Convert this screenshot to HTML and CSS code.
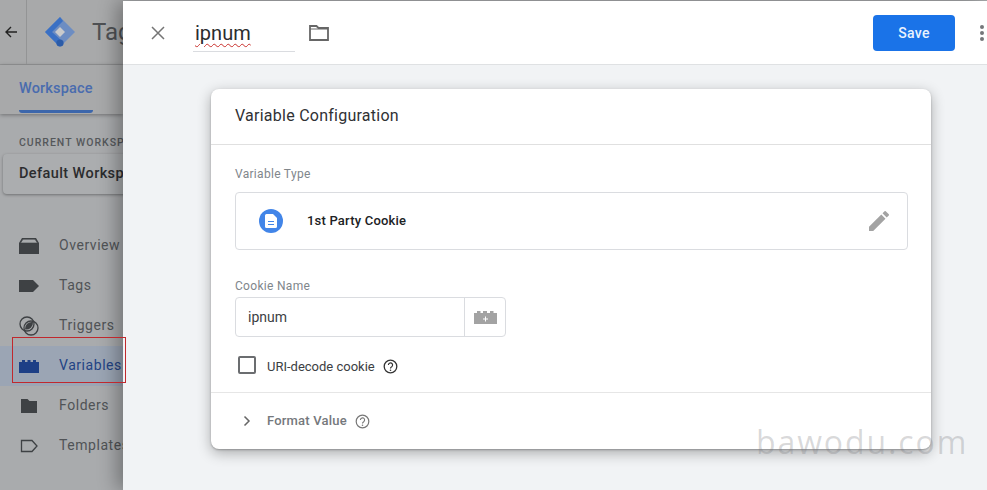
FILE: index.html
```html
<!DOCTYPE html>
<html lang="en">
  <head>
    <meta charset="UTF-8" />
    <title>Variable Configuration</title>
    <link rel="stylesheet" href="styles.css">
  </head>
  <body>
    <div class="page">
      <!-- dimmed app behind the panel -->
      <div class="app">
        <div class="topbar">
          <div class="back">
            <svg width="14" height="14" viewBox="0 0 14 14"><path d="M13 7H2.500M7 2 2 7l5 5" fill="none" stroke="#222" stroke-width="1.400"/></svg>
          </div>
          <div class="brand">
            <svg width="32" height="32" viewBox="0 0 32 32">
              <path d="M16 1 31 16 16 31 1 16Z" fill="#6d8dc2"/>
              <path d="M16 1 1 16 14 29 18 25 8 16 19 5 Z" fill="#3a70c4"/>
              <path d="M16 11 21 16 16 21 11 16Z" fill="#c9cacb"/>
              <circle cx="16" cy="27" r="3.600" fill="#2c5ca8"/>
            </svg>
            <span class="brand-name">Tag</span>
          </div>
        </div>
        <div class="tabs">
          <div class="tab">Workspace</div>
        </div>
        <div class="sidebar">
          <div class="ws-label">CURRENT WORKSP</div>
          <div class="ws-card">Default Worksp</div>
          <ul class="nav">
            <li class="nav-item">
              <svg width="20" height="16" viewBox="0 0 20 16"><path d="M3 0h14l3 5v11H0V5Z" fill="#3e4144"/><path d="M1.500 5 4 1.200h12L18.500 5Z" fill="#a9abad" stroke="#3e4144" stroke-width=".6"/></svg>
              Overview
            </li>
            <li class="nav-item">
              <svg width="20" height="16" viewBox="0 0 20 16"><path d="M0 2h14l6 6-6 6H0Z" fill="#3e4144"/></svg>
              Tags
            </li>
            <li class="nav-item">
              <svg width="20" height="20" viewBox="0 0 20 20"><circle cx="8" cy="8" r="7" fill="none" stroke="#3e4144" stroke-width="1.300"/><circle cx="12" cy="12" r="7" fill="none" stroke="#3e4144" stroke-width="1.300"/><path d="M6 13.500A7 7 0 0 1 14 6 7 7 0 0 1 6 13.500Z" fill="#3e4144"/></svg>
              Triggers
            </li>
            <li class="nav-item nav-active">
              <svg width="20" height="13" viewBox="0 0 20 13"><path d="M0 2h3V0h3v2h2.500V0h3v2H14V0h3v2h3v11H0Z" fill="#1d3f86"/></svg>
              Variables
            </li>
            <li class="nav-item">
              <svg width="20" height="16" viewBox="0 0 20 16"><path d="M2 1h6.500l2 2H18v12H2Z" fill="#3e4144"/></svg>
              Folders
            </li>
            <li class="nav-item">
              <svg width="20" height="16" viewBox="0 0 20 16"><path d="M2.500 2.500h10.500l5 5.500-5 5.500H2.500Z" fill="none" stroke="#3e4144" stroke-width="1.300"/></svg>
              Templates
            </li>
          </ul>
        </div>
      </div>

      <!-- variable editor sheet -->
      <div class="sheet">
        <div class="sheet-head">
          <svg class="close" width="16" height="16" viewBox="0 0 16 16"><path d="M2 2l12 12M14 2 2 14" stroke="#757575" stroke-width="1.500"/></svg>
          <div class="name-field"><span class="name-text">ipnum</span></div>
          <svg class="folder" width="20" height="16" viewBox="0 0 20 16"><path d="M1 1h6.500l2 2H19v12H1Z" fill="none" stroke="#666" stroke-width="1.800"/><path d="M1 4h18" stroke="#666" stroke-width="1"/></svg>
          <button class="save">Save</button>
          <div class="more"><i></i><i></i><i></i></div>
        </div>
        <div class="sheet-body">
          <div class="card">
            <div class="card-title">Variable Configuration</div>
            <div class="card-content">
              <div class="field-label">Variable Type</div>
              <div class="type-box">
                <span class="type-icon">
                  <svg width="12" height="14" viewBox="0 0 12 14"><path d="M1.500 0H8l4 4v8.500a1.500 1.500 0 0 1-1.500 1.500h-9A1.500 1.500 0 0 1 0 12.500v-11A1.500 1.500 0 0 1 1.500 0Z" fill="#fff"/><path d="M3 7.500h6M3 10.500h6" stroke="#4285e8" stroke-width="1.200"/></svg>
                </span>
                <span class="type-name">1st Party Cookie</span>
                <svg class="pencil" width="20" height="20" viewBox="0 0 20 20"><path d="M0 20v-4.200L12.300 3.500l4.200 4.200L4.200 20ZM13.500 2.300 15.600.2a.8.8 0 0 1 1.100 0l3.100 3.100a.8.8 0 0 1 0 1.100l-2.100 2.100Z" fill="#a3a3a3"/></svg>
              </div>
              <div class="field-label cookie-label">Cookie Name</div>
              <div class="input-box">
                <span class="input-text">ipnum</span>
                <span class="input-btn">
                  <svg width="23" height="13" viewBox="0 0 23 13"><path d="M0 2h3V0h3.500v2H9V0h4v2h3V0h3.500v2H23v11H0Z" fill="#a3a3a3"/><path d="M11.500 5.500v5M9 8h5" stroke="#fff" stroke-width="1"/></svg>
                </span>
              </div>
              <div class="check-row">
                <span class="checkbox"></span>
                <span class="check-text">URI-decode cookie</span>
                <svg class="help" width="15" height="15" viewBox="0 0 15 15"><circle cx="7.500" cy="7.500" r="6.300" fill="none" stroke="#333" stroke-width="1.300"/><path d="M5.400 6a2.100 2.100 0 1 1 3.300 1.700c-.8.500-1.200.9-1.200 1.800" fill="none" stroke="#333" stroke-width="1.200"/><circle cx="7.500" cy="11.200" r=".8" fill="#333"/></svg>
              </div>
            </div>
            <div class="format-row">
              <svg class="chevron" width="8" height="12" viewBox="0 0 8 12"><path d="M1.500 1.500 6 6l-4.500 4.500" fill="none" stroke="#666" stroke-width="1.500"/></svg>
              <span class="format-text">Format Value</span>
              <svg class="help" width="15" height="15" viewBox="0 0 15 15"><circle cx="7.500" cy="7.500" r="6.300" fill="none" stroke="#777" stroke-width="1.200"/><path d="M5.400 6a2.100 2.100 0 1 1 3.300 1.700c-.8.500-1.200.9-1.200 1.800" fill="none" stroke="#777" stroke-width="1.100"/><circle cx="7.500" cy="11.200" r=".8" fill="#777"/></svg>
            </div>
          </div>
        </div>
      </div>

      <div class="red-box"></div>
      <div class="watermark">bawodu.com</div>
    </div>
  </body>
</html>
```

FILE: styles.css
```css
* {
  box-sizing: border-box;
}

body {
  margin: 0;
  font-family: Roboto, "Liberation Sans", sans-serif;
}

.page {
  position: relative;
  width: 987px;
  height: 490px;
  overflow: hidden;
  background-color: #a9abad;
}

.app {
  width: 123px;
  height: 490px;
  overflow: hidden;
}

.topbar {
  display: flex;
  height: 65px;
  background-color: #a8a9aa;
  border-bottom: 1px solid #969798;
}
.back {
  flex: none;
  width: 27px;
  display: flex;
  align-items: center;
  justify-content: flex-start;
  padding-left: 4px;
  border-right: 1px solid #939495;
}
.brand {
  display: flex;
  align-items: center;
  gap: 16px;
  padding-left: 17px;
  white-space: nowrap;
}
.brand svg {
  flex: none;
}
.brand-name {
  font-size: 24px;
  color: #4f5154;
}

.tabs {
  height: 49px;
  background-color: #a8a9aa;
  padding: 15px 0 0 19px;
  box-shadow: 0 1px 4px rgba(0, 0, 0, 0.35);
}
.tab {
  width: 74px;
  height: 33px;
  font-size: 14.500px;
  font-weight: 500;
  letter-spacing: 0.15px;
  color: #4a6cae;
  border-bottom: 3px solid #3c66ab;
  border-radius: 0 0 3px 3px;
  white-space: nowrap;
}

.ws-label {
  margin: 22px 0 0 19px;
  font-size: 10.500px;
  font-weight: 500;
  letter-spacing: 1px;
  line-height: 13px;
  color: #55585b;
  white-space: nowrap;
}
.ws-card {
  width: 180px;
  height: 40px;
  margin: 5px 0 0 3px;
  padding-left: 16px;
  line-height: 39px;
  font-size: 14.500px;
  font-weight: 500;
  letter-spacing: 0.4px;
  color: #2b2c2e;
  background-color: #abadaf;
  border-radius: 4px;
  box-shadow: 0 1px 3px rgba(0, 0, 0, 0.35);
  white-space: nowrap;
}

.nav {
  list-style: none;
  margin: 32px 0 0;
  padding: 0;
}
.nav-item {
  display: flex;
  align-items: center;
  gap: 20px;
  height: 40px;
  padding: 0 0 2px 19px;
  font-size: 14px;
  letter-spacing: 0.55px;
  color: #505356;
  white-space: nowrap;
}
.nav-item svg {
  flex: none;
  margin-top: 2px;
}
.nav-active {
  background-color: #9ba5b4;
  color: #234384;
}

/* sheet over the app */
.sheet {
  position: absolute;
  top: 1px;
  left: 123px;
  right: 0;
  bottom: 0;
  background-color: #f1f3f5;
  box-shadow: -6px 0 18px rgba(0, 0, 0, 0.32);
}
.sheet-head {
  display: flex;
  align-items: center;
  height: 64px;
  padding-left: 27px;
  background-color: #fff;
  border-bottom: 1px solid #dfe1e3;
}
.name-field {
  width: 102px;
  height: 34px;
  margin: 0 14px 0 27px;
  padding: 0 2px;
  border-bottom: 1px solid #dadce0;
  position: relative;
  top: 2px;
}
.name-text {
  font-size: 20px;
  line-height: 30px;
  color: #2b2c2e;
  text-decoration: underline wavy #c9302c 1px;
  text-underline-offset: 3px;
}
.save {
  width: 82px;
  height: 36px;
  margin-left: 544px;
  padding: 0;
  border: 0;
  border-radius: 4px;
  background-color: #1a73e8;
  color: #e9f2fe;
  font-family: Roboto, "Liberation Sans", sans-serif;
  font-size: 14px;
  font-weight: 500;
  letter-spacing: 0.3px;
}
.more {
  display: flex;
  flex-direction: column;
  gap: 2px;
  margin-left: 25px;
}
.more i {
  width: 4px;
  height: 4px;
  border-radius: 50%;
  background-color: #75777a;
}

.sheet-body {
  padding: 24px 0 0 88px;
}
.card {
  width: 720px;
  height: 360px;
  background-color: #fff;
  border-radius: 8px;
  box-shadow: 0 1px 2px rgba(0, 0, 0, 0.25), 0 4px 14px rgba(0, 0, 0, 0.3);
}
.card-title {
  height: 56px;
  padding: 17px 0 0 24px;
  font-size: 16px;
  line-height: 20px;
  letter-spacing: 0.25px;
  color: #303134;
  border-bottom: 1px solid #e0e0e0;
}
.card-content {
  height: 248px;
  padding: 22px 24px 0;
  border-bottom: 1px solid #e6e6e6;
}
.field-label {
  font-size: 12px;
  line-height: 14px;
  letter-spacing: 0.3px;
  color: #80868b;
}
.type-box {
  display: flex;
  align-items: center;
  width: 673px;
  height: 58px;
  margin-top: 11px;
  padding: 0 18px 2px 23px;
  border: 1px solid #dadce0;
  border-radius: 4px;
}
.type-icon {
  display: flex;
  align-items: center;
  justify-content: center;
  width: 24px;
  height: 24px;
  margin-top: 2px;
  border-radius: 50%;
  background-color: #4285e8;
}
.type-name {
  margin-left: 24px;
  font-size: 13px;
  font-weight: 500;
  letter-spacing: 0.2px;
  color: #202124;
}
.pencil {
  margin-left: auto;
  margin-top: 2px;
}
.cookie-label {
  margin-top: 29px;
}
.input-box {
  display: flex;
  width: 271px;
  height: 40px;
  margin-top: 4px;
  border: 1px solid #dadce0;
  border-radius: 4px;
}
.input-text {
  flex: 1;
  padding-left: 12px;
  font-size: 14px;
  line-height: 38px;
  color: #3c4043;
}
.input-btn {
  display: flex;
  align-items: center;
  justify-content: center;
  width: 41px;
  border-left: 1px solid #dadce0;
}
.check-row {
  display: flex;
  align-items: center;
  margin: 18px 0 0 3px;
}
.checkbox {
  width: 18px;
  height: 18px;
  border: 2px solid #6b6d70;
  border-radius: 2px;
}
.check-text {
  margin: 3px 8px 0 11px;
  font-size: 13px;
  color: #3c4043;
}
.check-row .help {
  margin-top: 4px;
}
.format-row {
  display: flex;
  align-items: center;
  height: 55px;
  padding-left: 32px;
}
.format-text {
  margin: 0 8px 0 16px;
  font-size: 13px;
  font-weight: 500;
  letter-spacing: 0.2px;
  color: #75787c;
}
.format-row .help {
  margin-top: 1px;
}

.red-box {
  position: absolute;
  top: 337px;
  left: 12px;
  width: 114px;
  height: 46px;
  border: 1px solid #c0282d;
}
.watermark {
  position: absolute;
  top: 423px;
  left: 756px;
  font-family: "Open Sans", sans-serif;
  font-size: 32px;
  line-height: 38px;
  letter-spacing: 1.900px;
  color: rgba(120, 120, 125, 0.28);
}
```
